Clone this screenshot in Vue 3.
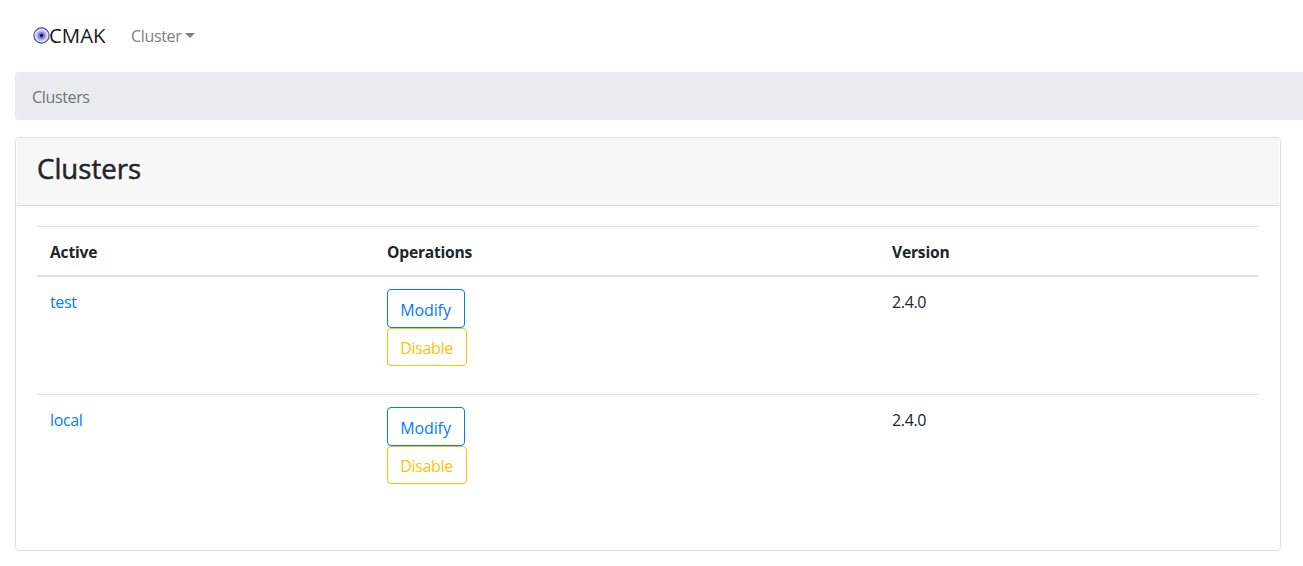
<script setup>
const clusters = [
  { name: 'test', version: '2.4.0' },
  { name: 'local', version: '2.4.0' },
]
</script>

<template>
  <div class="page">
    <nav class="navbar">
      <a class="brand">
        <svg class="logo" viewBox="0 0 17 17" width="17" height="17">
          <circle cx="8.5" cy="8.5" r="7.6" fill="#e4e4f6" stroke="#4a45b0" stroke-width="1.2" />
          <circle cx="8.5" cy="8.5" r="5.2" fill="#b4b2e2" />
          <circle cx="8.5" cy="8.5" r="3.6" fill="#8580cf" />
          <circle cx="8.5" cy="8.5" r="1.7" fill="#15107c" />
        </svg>
        <span class="brand-name">CMAK</span>
      </a>
      <a class="menu"><span class="menu-label">Cluster</span><span class="caret"></span></a>
    </nav>
    <div class="breadcrumb"><span class="crumb">Clusters</span></div>
    <section class="card">
      <header class="card-header"><h3>Clusters</h3></header>
      <div class="card-body">
        <div class="row head">
          <div><span class="th-active">Active</span></div>
          <div><span class="th-ops">Operations</span></div>
          <div><span class="th-version">Version</span></div>
        </div>
        <div v-for="c in clusters" :key="c.name" class="row item">
          <div class="cell"><a class="link">{{ c.name }}</a></div>
          <div class="ops">
            <button class="btn modify">Modify</button>
            <button class="btn disable">Disable</button>
          </div>
          <div class="cell"><span class="version">{{ c.version }}</span></div>
        </div>
      </div>
    </section>
  </div>
</template>

<style>
body { background: #fff; overflow: hidden; }
</style>

<style scoped>
.page {
  box-sizing: border-box;
  height: 566px;
  padding-left: 15px;
  font-family: "Open Sans", "Noto Sans", sans-serif;
  font-size: 16px;
  letter-spacing: -0.35px;
  line-height: 24px;
  color: #212529;
  overflow: hidden;
}
.page * { box-sizing: border-box; }
.navbar { height: 72px; display: flex; align-items: center; padding-left: 18px; }
.brand { display: flex; align-items: center; width: 98px; color: #1a1a1a; font-size: 20.4px; line-height: 30px; }
.logo { display: block; flex: none; margin-top: -2px; }
.brand-name { margin-left: -1px; margin-top: -2px; letter-spacing: 0; }
.menu { display: flex; align-items: center; color: #808080; }
.menu-label { margin-top: -1px; }
.caret { margin-left: 4px; margin-top: -1px; border: 5px solid transparent; border-top-color: #808080; border-bottom: 0; }
.breadcrumb { height: 48px; padding: 13px 17px; background: #e9ecef; border-radius: 4px 0 0 4px; color: #6c757d; }
.card { width: 1266px; height: 414px; margin-top: 17px; border: 1px solid #dfdfdf; border-radius: 4px; }
.card-header { height: 68px; margin: 0 1px; padding: 12px 20px; background: #f7f7f7; border-bottom: 1px solid #d8d8d8; border-radius: 3px 3px 0 0; }
h3 { margin: 0; font-size: 27.6px; line-height: 36px; font-weight: 500; letter-spacing: 0; -webkit-text-stroke: 0.5px #212529; }
.card-body { padding: 20px 22px 0 21px; }
.row { display: grid; grid-template-columns: 337px 505px 1fr; padding-left: 13px; border-top: 1px solid #dee2e6; }
.head { height: 51px; padding-top: 13px; border-bottom: 2px solid #dee2e6; font-weight: 700; font-size: 15.6px; letter-spacing: -0.2px; }
.item { height: 118px; padding-top: 12px; }
.head + .item { border-top: 0; height: 117px; }
.cell { padding-top: 1px; }
.link { color: #007bff; }
.ops { display: flex; flex-direction: column; align-items: flex-start; }
.btn { display: block; height: 38px; padding: 1px 1px 0 0; font: inherit; letter-spacing: inherit; background: transparent; border: 1px solid; border-radius: 4px; text-align: center; }
.modify { width: 78px; height: 39px; padding-top: 2px; letter-spacing: -0.1px; color: #007bff; }
.disable { width: 80px; color: #ffc107; }
</style>
